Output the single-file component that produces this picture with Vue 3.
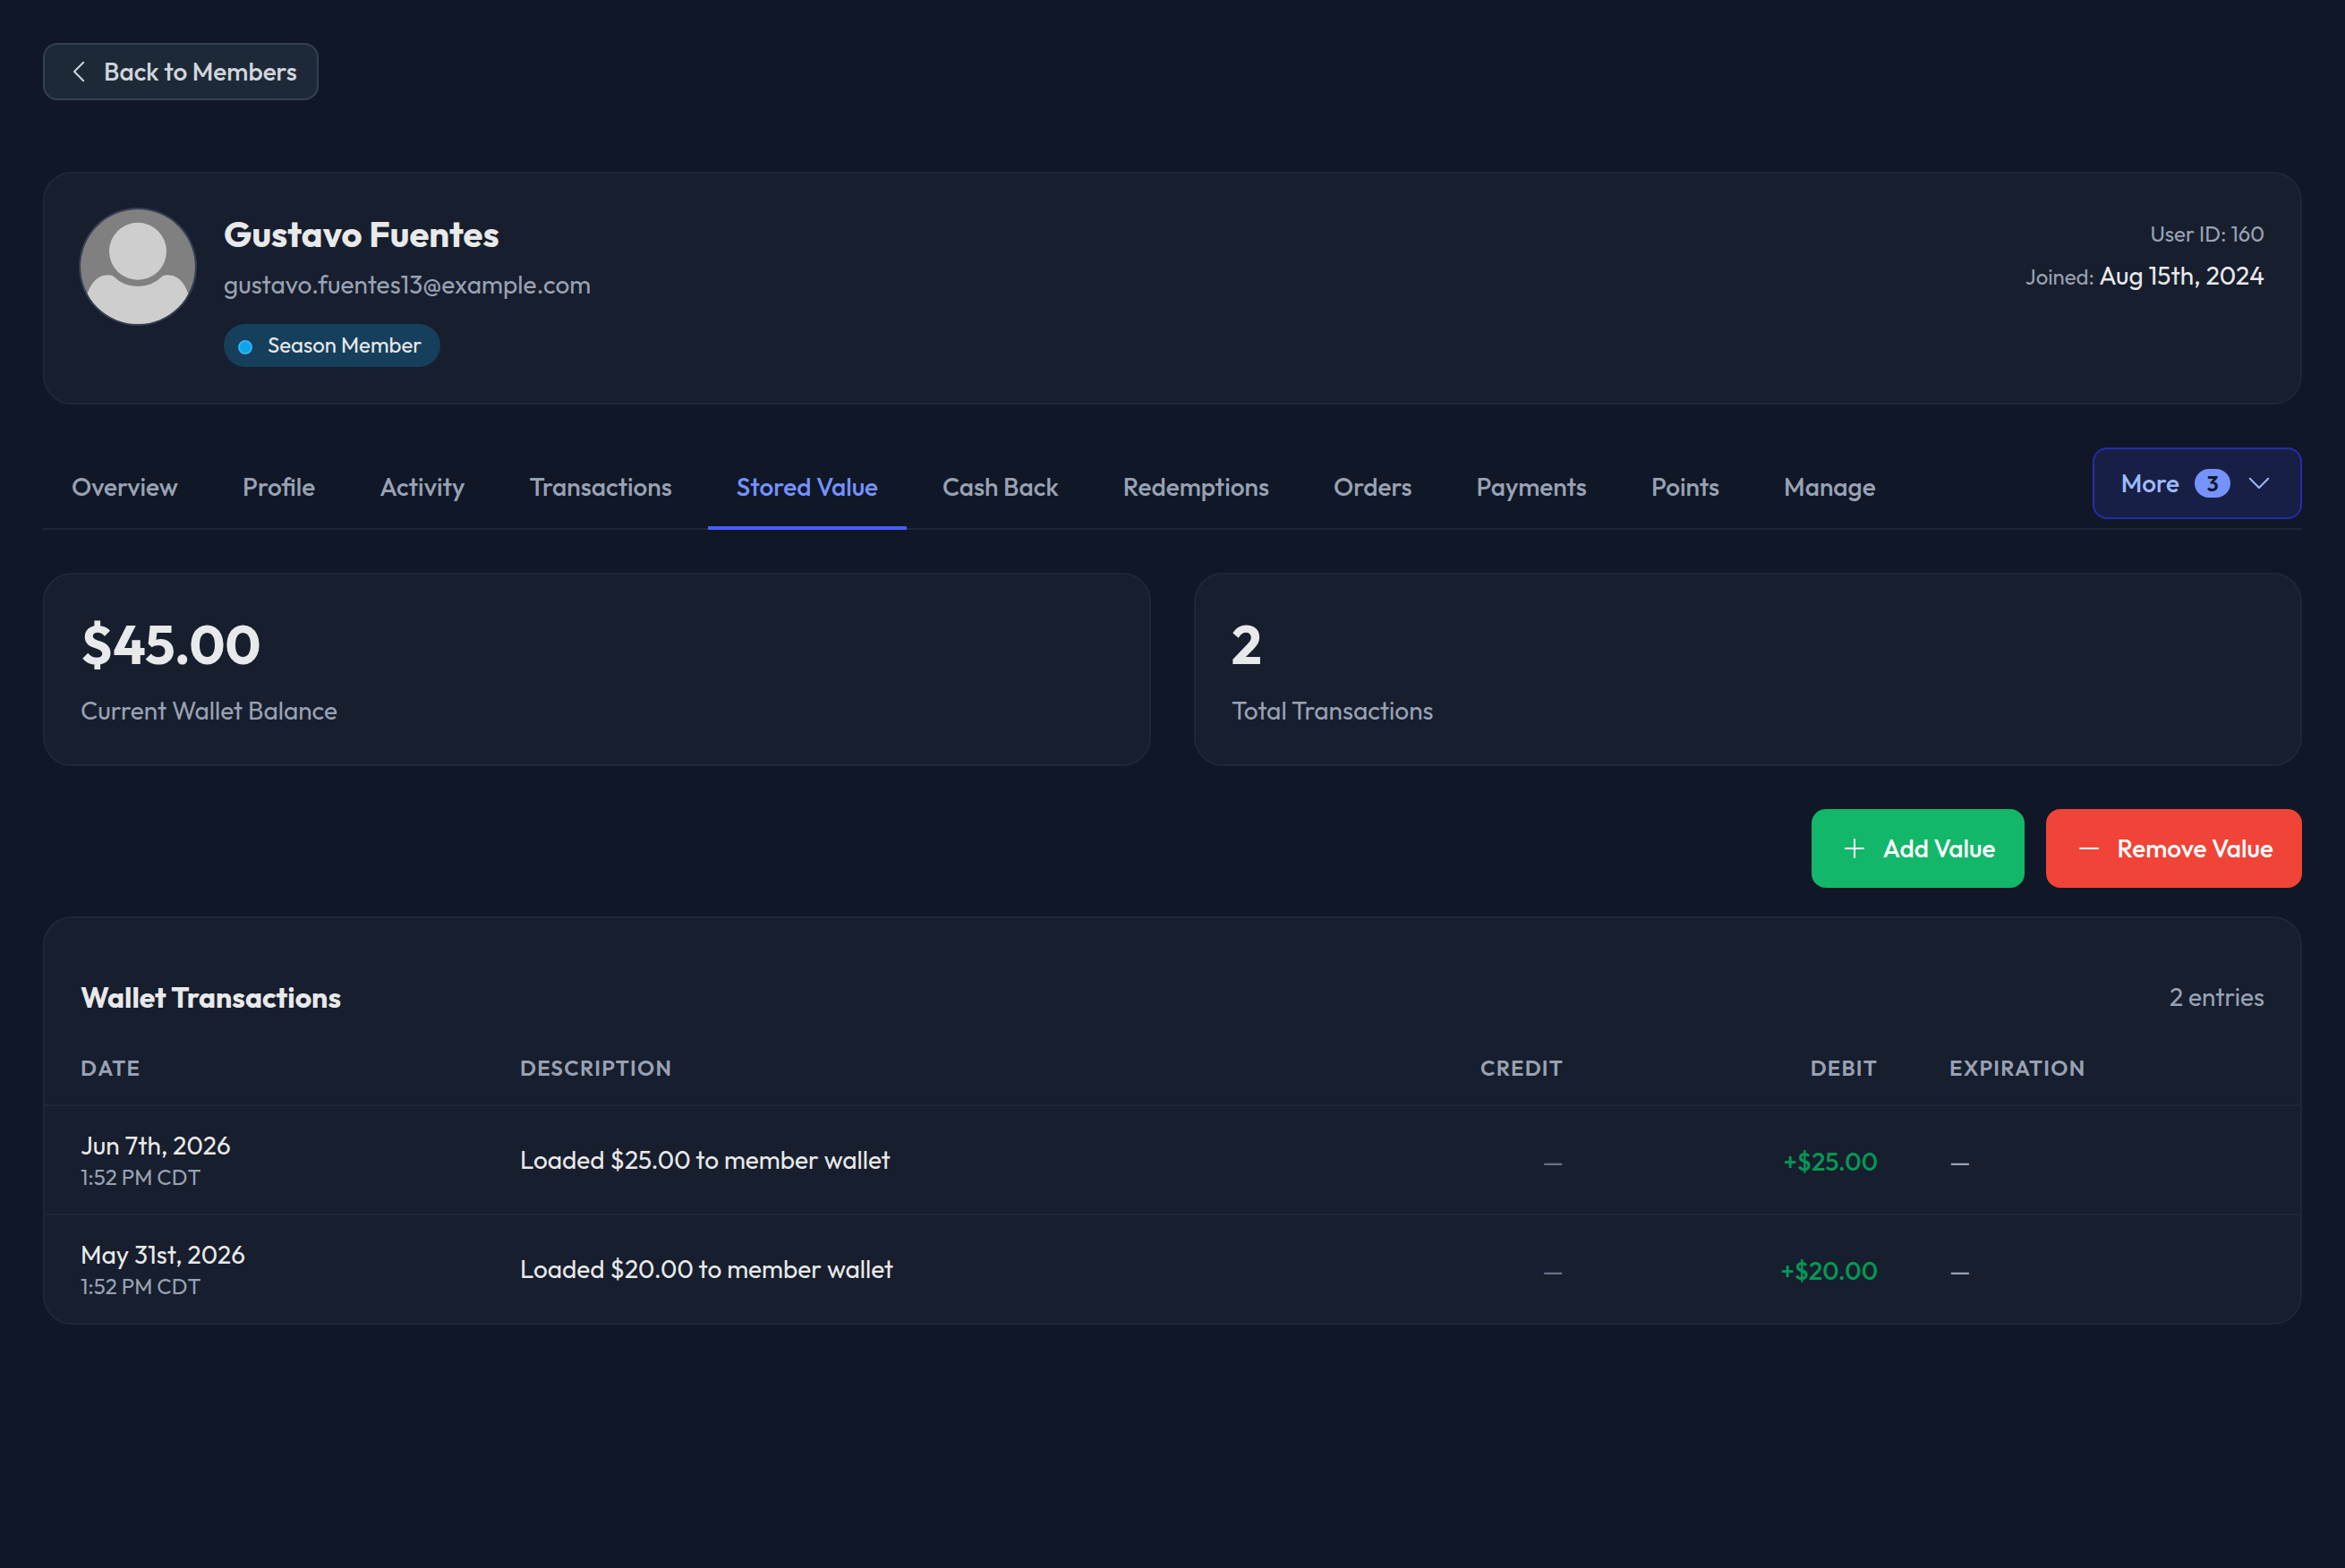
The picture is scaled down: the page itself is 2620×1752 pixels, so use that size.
<script setup>
import { ref } from 'vue';

const member = {
    id: 160,
    name: 'Gustavo Fuentes',
    email: 'gustavo.fuentes13@example.com',
    level: 'Season Member',
    joined: 'Aug 15th, 2024'
};

const tabs = [
    'Overview',
    'Profile',
    'Activity',
    'Transactions',
    'Stored Value',
    'Cash Back',
    'Redemptions',
    'Orders',
    'Payments',
    'Points',
    'Manage'
];
const activeTab = ref('Stored Value');
const hiddenTabs = 3;

const stats = [
    { value: '$45.00', label: 'Current Wallet Balance' },
    { value: '2', label: 'Total Transactions' }
];

const transactions = [
    { id: 1, date: 'Jun 7th, 2026', time: '1:52 PM CDT', description: 'Loaded $25.00 to member wallet', debit: '+$25.00' },
    { id: 2, date: 'May 31st, 2026', time: '1:52 PM CDT', description: 'Loaded $20.00 to member wallet', debit: '+$20.00' }
];
</script>

<template>
    <div class="page">
        <button type="button" class="back-button">
            <svg class="icon" viewBox="0 0 32 32">
                <path d="M21.2 5.8 11 16l10.2 10.2" />
            </svg>
            Back to Members
        </button>

        <section class="card member">
            <svg class="avatar" viewBox="0 0 128 128">
                <rect width="128" height="128" fill="#808080" />
                <circle cx="64" cy="46.8" r="32" fill="#cecece" />
                <path
                    d="M5 104C9 84 18 73.3 31 73.3Q35.5 73.3 37 75A38.5 38.5 0 0 0 91 75Q92.5 73.3 97 73.3C110 73.3 119 84 123 104V128H5Z"
                    fill="#cecece" />
            </svg>
            <div class="member-info">
                <h1>{{ member.name }}</h1>
                <p class="email">{{ member.email }}</p>
                <span class="level"><i class="dot"></i>{{ member.level }}</span>
            </div>
            <div class="member-meta">
                <p class="user-id">User ID: {{ member.id }}</p>
                <p class="joined"><small>Joined:</small> {{ member.joined }}</p>
            </div>
        </section>

        <div class="tab-bar">
            <nav class="tabs">
                <button v-for="tab in tabs" :key="tab" type="button" class="tab" :class="{ active: tab === activeTab }"
                    @click="activeTab = tab">{{ tab }}</button>
            </nav>
            <button type="button" class="more-button">
                More
                <span class="count">{{ hiddenTabs }}</span>
                <svg class="icon" viewBox="0 0 32 32">
                    <path d="M5.8 10.8 16 21l10.2-10.2" />
                </svg>
            </button>
        </div>

        <div class="stats">
            <div v-for="stat in stats" :key="stat.label" class="card stat">
                <div class="stat-value">{{ stat.value }}</div>
                <div class="stat-label">{{ stat.label }}</div>
            </div>
        </div>

        <div class="actions">
            <button type="button" class="action add">
                <svg class="icon" viewBox="0 0 32 32">
                    <path d="M16 6v20M6 16h20" />
                </svg>
                Add Value
            </button>
            <button type="button" class="action remove">
                <svg class="icon" viewBox="0 0 32 32">
                    <path d="M6 16h20" />
                </svg>
                Remove Value
            </button>
        </div>

        <section class="card wallet">
            <header class="wallet-header">
                <h2>Wallet Transactions</h2>
                <span>{{ transactions.length }} entries</span>
            </header>
            <table>
                <colgroup>
                    <col class="col-date">
                    <col>
                    <col class="col-credit">
                    <col class="col-debit">
                    <col class="col-expiration">
                </colgroup>
                <thead>
                    <tr>
                        <th>Date</th>
                        <th>Description</th>
                        <th class="right">Credit</th>
                        <th class="right">Debit</th>
                        <th>Expiration</th>
                    </tr>
                </thead>
                <tbody>
                    <tr v-for="row in transactions" :key="row.id">
                        <td>
                            <div class="date">{{ row.date }}</div>
                            <div class="time">{{ row.time }}</div>
                        </td>
                        <td>{{ row.description }}</td>
                        <td class="amount right none">—</td>
                        <td class="amount right debit">{{ row.debit }}</td>
                        <td class="amount expiration">—</td>
                    </tr>
                </tbody>
            </table>
        </section>
    </div>
</template>

<style>
body {
    margin: 0;
    background: #101726;
}
</style>

<style scoped>
.page {
    box-sizing: border-box;
    min-height: 1752px;
    padding: 48px;
    background: #101726;
    color: #e8e9ea;
    font-family: Outfit, Lato, sans-serif;
    font-size: 28px;
    line-height: 40px;
    -webkit-font-smoothing: antialiased;
}

h1,
h2,
p {
    margin: 0;
}

button {
    display: inline-flex;
    align-items: center;
    box-sizing: border-box;
    border: none;
    padding: 0;
    background: none;
    font: inherit;
    font-weight: 500;
    white-space: nowrap;
    cursor: pointer;
}

.icon {
    flex: none;
    width: 32px;
    height: 32px;
    fill: none;
    stroke: currentColor;
    stroke-width: 2;
    stroke-linecap: round;
    stroke-linejoin: round;
}

.card {
    box-sizing: border-box;
    border: 2px solid #1d2837;
    border-radius: 32px;
    background: #171e2d;
}

.back-button {
    gap: 12px;
    height: 64px;
    padding: 0 22px;
    border: 2px solid #344054;
    border-radius: 16px;
    background: #1e2938;
    color: #d0d5dd;
}

.member {
    display: flex;
    align-items: flex-start;
    height: 260px;
    margin-top: 80px;
    padding: 40px;
}

.avatar {
    flex: none;
    width: 128px;
    height: 128px;
    border-radius: 50%;
    box-shadow: 0 0 0 2px #344054;
}

.member-info {
    flex: 1;
    margin-left: 32px;
}

h1 {
    font-size: 40px;
    font-weight: 700;
    line-height: 54px;
}

.email {
    margin-top: 10px;
    color: #98a2b3;
}

.level {
    display: inline-flex;
    align-items: center;
    box-sizing: border-box;
    height: 48px;
    margin-top: 24px;
    padding: 0 21px 2px 16px;
    border-radius: 24px;
    background: #163f5c;
    font-size: 24px;
}

.dot {
    box-sizing: border-box;
    width: 16px;
    height: 16px;
    margin: 6px 17px 0 0;
    border: 2px solid #36b1f0;
    border-radius: 50%;
    background: #0ba5ec;
}

.member-meta {
    padding-top: 8px;
    text-align: right;
}

.user-id {
    color: #98a2b3;
    font-size: 24px;
    line-height: 38px;
}

.joined {
    margin-top: 8px;
}

.joined small {
    color: #98a2b3;
    font-size: 24px;
}

.tab-bar {
    display: flex;
    align-items: flex-start;
    justify-content: space-between;
    box-sizing: border-box;
    height: 92px;
    margin-top: 48px;
    border-bottom: 2px solid #1d2837;
}

.tabs {
    display: flex;
    gap: 8px;
}

.tab {
    height: 92px;
    padding: 0 32px;
    border-bottom: 4px solid transparent;
    color: #98a2b3;
}

.tab.active {
    border-bottom-color: #465fff;
    color: #7592ff;
}

.more-button {
    gap: 16px;
    height: 80px;
    padding: 0 30px;
    border: 2px solid #252dae;
    border-radius: 16px;
    background: #181f44;
    color: #9cb9ff;
}

.count {
    width: 40px;
    margin-left: 1px;
    border-radius: 16px;
    background: #7592ff;
    color: #101828;
    font-size: 24px;
    font-weight: 600;
    line-height: 32px;
    text-align: center;
}

.stats {
    display: grid;
    grid-template-columns: 1fr 1fr;
    gap: 48px;
    margin-top: 48px;
}

.stat {
    padding: 40px;
}

.stat-value {
    font-size: 60px;
    font-weight: 700;
    line-height: 76px;
}

.stat-label {
    margin-top: 16px;
    color: #98a2b3;
}

.actions {
    display: flex;
    justify-content: flex-end;
    gap: 24px;
    margin-top: 48px;
}

.action {
    gap: 16px;
    height: 88px;
    padding: 0 32px;
    border-radius: 16px;
    color: #fff;
}

.add {
    padding-right: 33px;
    background: #12b76a;
}

.remove {
    gap: 15px;
    background: #f04438;
}

.wallet {
    margin-top: 32px;
    padding-top: 64px;
    overflow: hidden;
}

.wallet-header {
    display: flex;
    align-items: center;
    justify-content: space-between;
    height: 48px;
    padding: 0 40px;
    color: #98a2b3;
}

h2 {
    color: #e8e9ea;
    font-size: 32px;
    font-weight: 700;
}

table {
    width: 100%;
    margin-top: 16px;
    border-collapse: separate;
    border-spacing: 0;
    table-layout: fixed;
}

.col-date {
    width: 491px;
}

.col-credit {
    width: 350px;
}

.col-debit {
    width: 351px;
}

.col-expiration {
    width: 432px;
}

th {
    padding: 23px 40px 25px;
    border-bottom: 2px solid #1d2837;
    color: #98a2b3;
    font-size: 24px;
    font-weight: 600;
    letter-spacing: 0.05em;
    line-height: 32px;
    text-align: left;
    text-transform: uppercase;
}

td {
    padding: 24px 40px;
    border-bottom: 2px solid #1d2837;
    vertical-align: middle;
}

tr:last-child td {
    border-bottom: none;
}

.right {
    text-align: right;
}

.time {
    padding-bottom: 2px;
    color: #98a2b3;
    font-size: 24px;
    line-height: 30px;
}

.amount {
    padding-top: 28px;
}

.none {
    color: #667085;
}

.debit {
    color: #039855;
    font-weight: 500;
}

.expiration {
    color: #98a2b3;
}
</style>
